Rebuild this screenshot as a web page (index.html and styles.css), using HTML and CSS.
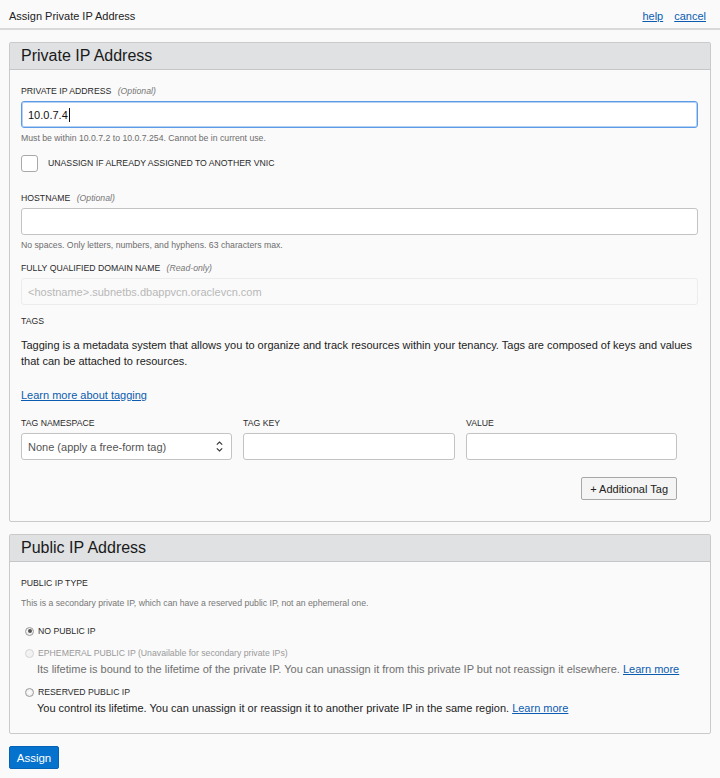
FILE: index.html
```html
<!DOCTYPE html>
<html lang="en">
<head>
<meta charset="utf-8">
<title>Assign Private IP Address</title>
<link rel="stylesheet" href="styles.css">
</head>
<body>
<header class="topbar">
  <h1 class="title">Assign Private IP Address</h1>
  <nav class="toplinks"><a href="#">help</a><a href="#">cancel</a></nav>
</header>

<main class="content">
  <section class="panel">
    <h2 class="panel-head">Private IP Address</h2>
    <div class="panel-body">
      <label class="lbl">Private IP Address <em class="opt">(Optional)</em></label>
      <div class="input focus"><span>10.0.7.4</span><span class="caret"></span></div>
      <p class="help">Must be within 10.0.7.2 to 10.0.7.254. Cannot be in current use.</p>
      <div class="check-row"><span class="checkbox"></span><span class="check-lbl">Unassign if already assigned to another VNIC</span></div>

      <label class="lbl lbl-host">Hostname <em class="opt">(Optional)</em></label>
      <div class="input"></div>
      <p class="help">No spaces. Only letters, numbers, and hyphens. 63 characters max.</p>

      <label class="lbl lbl-fqdn">Fully Qualified Domain Name <em class="opt">(Read-only)</em></label>
      <div class="input readonly">&lt;hostname&gt;.subnetbs.dbappvcn.oraclevcn.com</div>

      <div class="lbl lbl-tags">Tags</div>
      <p class="para">Tagging is a metadata system that allows you to organize and track resources within your tenancy. Tags are composed of keys and values that can be attached to resources.</p>
      <p class="learn"><a href="#">Learn more about tagging</a></p>

      <div class="tag-grid">
        <div class="tag-col">
          <label class="lbl">Tag Namespace</label>
          <div class="input select"><span>None (apply a free-form tag)</span>
            <svg class="sel-arrow" width="7" height="11" viewBox="0 0 7 11"><path d="M0.8 3.6 L3.5 1 L6.2 3.6 M0.8 7.4 L3.5 10 L6.2 7.4" fill="none" stroke="#333" stroke-width="1.1"/></svg>
          </div>
        </div>
        <div class="tag-col">
          <label class="lbl">Tag Key</label>
          <div class="input"></div>
        </div>
        <div class="tag-col">
          <label class="lbl">Value</label>
          <div class="input"></div>
        </div>
      </div>
      <div class="btn-row"><button class="btn">+ Additional Tag</button></div>
    </div>
  </section>

  <section class="panel">
    <h2 class="panel-head">Public IP Address</h2>
    <div class="panel-body body2">
      <div class="lbl">Public IP Type</div>
      <p class="help help2">This is a secondary private IP, which can have a reserved public IP, not an ephemeral one.</p>
      <div class="radio-row r1"><span class="radio checked"></span><span class="radio-lbl">No Public IP</span></div>
      <div class="radio-row r2 disabled"><span class="radio"></span><span class="radio-lbl">Ephemeral Public IP <span class="nocaps">(Unavailable for secondary private IPs)</span></span></div>
      <p class="desc muted">Its lifetime is bound to the lifetime of the private IP. You can unassign it from this private IP but not reassign it elsewhere. <a href="#">Learn more</a></p>
      <div class="radio-row r3"><span class="radio"></span><span class="radio-lbl">Reserved Public IP</span></div>
      <p class="desc">You control its lifetime. You can unassign it or reassign it to another private IP in the same region. <a href="#">Learn more</a></p>
    </div>
  </section>

  <div class="actions"><button class="btn-primary">Assign</button></div>
</main>
</body>
</html>
```

FILE: styles.css
```css
html, body {
  margin: 0;
  padding: 0;
  background: #fafafa;
}
body {
  font-family: "Liberation Sans", Arial, sans-serif;
  color: #222;
  font-size: 11px;
}
a { color: #0b5cb0; text-decoration: underline; }

.topbar {
  height: 28px;
  border-bottom: 2px solid #d9d9d9;
  display: flex;
  align-items: center;
  justify-content: space-between;
  padding: 0 14px 0 9px;
}
.title {
  margin: 0;
  font-size: 11px;
  font-weight: normal;
  color: #222;
  padding-top: 3px;
}
.toplinks {
  display: flex;
  gap: 11px;
  font-size: 11px;
  padding-top: 3px;
}

.content {
  padding: 0 9px;
}
.panel {
  margin-top: 12px;
  border: 1px solid #cacaca;
  border-radius: 2px;
  background: #fafafa;
}
.panel-head {
  margin: 0;
  height: 26px;
  line-height: 26px;
  background: #dfe1e3;
  border-bottom: 1px solid #c4c6c8;
  font-size: 16px;
  font-weight: normal;
  color: #1a1a1a;
  padding-left: 11px;
}
.panel-body {
  padding: 15px 12px 21px 11px;
}

.lbl {
  display: block;
  font-size: 8.7px;
  line-height: 12px;
  text-transform: uppercase;
  color: #2a2a2a;
  margin-bottom: 4px;
}
.opt {
  text-transform: none;
  color: #777;
  margin-left: 4px;
}
.input {
  box-sizing: border-box;
  height: 27px;
  background: #fff;
  border: 1px solid #c3c3c3;
  border-radius: 3px;
  display: flex;
  align-items: center;
  padding: 0 6px;
  font-size: 11px;
  color: #111;
}
.input.focus {
  border-color: #5b9ae6;
  box-shadow: inset 0 0 0 1px rgba(91, 154, 230, 0.45);
}
.caret {
  display: inline-block;
  width: 1px;
  height: 14px;
  background: #111;
  margin-left: 1px;
}
.input.readonly {
  background: #fafafa;
  border-color: #ececec;
  color: #b8b8b8;
  font-size: 11px;
}
.help {
  margin: 4px 0 0;
  font-size: 8.7px;
  line-height: 12px;
  color: #6d6d6d;
}
.check-row {
  display: flex;
  align-items: center;
  margin-top: 11px;
  height: 16px;
}
.checkbox {
  box-sizing: border-box;
  width: 17px;
  height: 17px;
  border: 1px solid #a9a9a9;
  border-radius: 3px;
  background: #fff;
}
.check-lbl {
  margin-left: 10px;
  font-size: 8.7px;
  text-transform: uppercase;
  color: #2a2a2a;
}
.lbl-host { margin-top: 21px; }
.lbl-fqdn { margin-top: 11px; }
.lbl-tags { margin-top: 10px; }

.para {
  margin: 10px 0 0;
  font-size: 11px;
  line-height: 16px;
  color: #222;
}
.learn {
  margin: 18px 0 0;
  font-size: 11px;
  line-height: 16px;
}

.tag-grid {
  display: grid;
  grid-template-columns: 211px 212px 211px;
  column-gap: 11px;
  margin-top: 14px;
}
.select {
  justify-content: space-between;
  color: #555;
}
.sel-arrow { margin-right: 2px; }

.btn-row {
  width: 656px;
  display: flex;
  justify-content: flex-end;
  margin-top: 17px;
}
.btn {
  box-sizing: border-box;
  height: 23px;
  padding: 0 8px;
  font-family: "Liberation Sans", Arial, sans-serif;
  font-size: 11px;
  color: #222;
  background: #f4f4f4;
  border: 1px solid #a8a8a8;
  border-radius: 2px;
}

.body2 { padding-top: 15px; padding-bottom: 17px; }
.help2 { margin-top: 8px; color: #777; }
.radio-row {
  display: flex;
  align-items: center;
  height: 12px;
  padding-left: 4px;
}
.r1 { margin-top: 16px; }
.r2 { margin-top: 10px; }
.r3 { margin-top: 9px; }
.radio {
  box-sizing: border-box;
  width: 9px;
  height: 9px;
  border-radius: 50%;
  border: 1px solid #9a9a9a;
  background: radial-gradient(circle, #fff 0, #e4e4e4 100%);
  position: relative;
}
.radio.checked::after {
  content: "";
  position: absolute;
  left: 1.5px;
  top: 1.5px;
  width: 4px;
  height: 4px;
  border-radius: 50%;
  background: #555;
}
.radio-lbl {
  margin-left: 4px;
  font-size: 8.7px;
  text-transform: uppercase;
  color: #2a2a2a;
}
.nocaps { text-transform: none; }
.disabled .radio { border-color: #d4d4d4; background: #f2f2f2; }
.disabled .radio-lbl { color: #999; }
.desc {
  margin: 2px 0 0 16px;
  font-size: 11px;
  line-height: 16px;
  color: #222;
}
.desc.muted { color: #6f6f6f; }

.actions {
  margin-top: 12px;
}
.btn-primary {
  box-sizing: border-box;
  width: 50px;
  height: 23px;
  background: #0572ce;
  border: 1px solid #0563b5;
  border-radius: 2px;
  color: #fff;
  font-family: "Liberation Sans", Arial, sans-serif;
  font-size: 11.5px;
  padding: 0;
}
```
